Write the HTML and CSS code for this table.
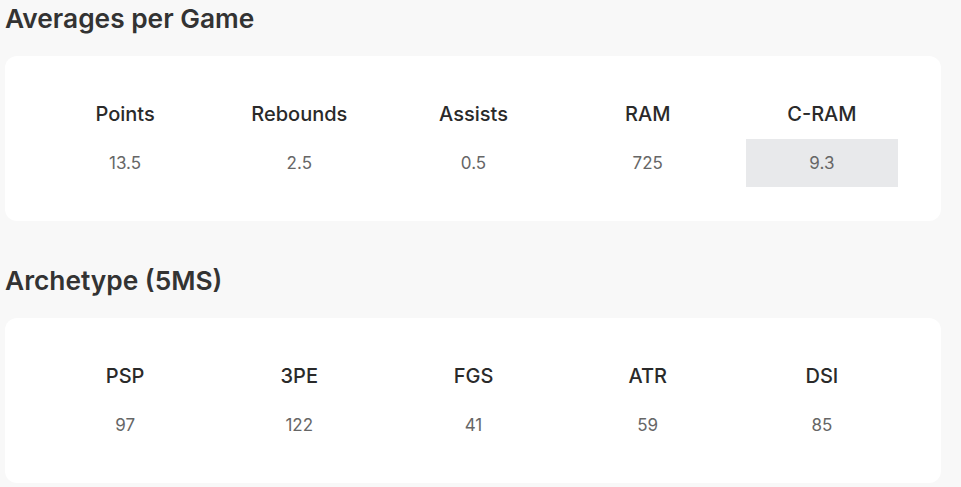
FILE: index.html
```html
<!DOCTYPE html>
<html lang="en">
<head>
<meta charset="utf-8">
<title>Player Stats</title>
<link rel="stylesheet" href="styles.css">
</head>
<body>
<main class="page">
  <section class="section">
    <h2 class="section-title">Averages per Game</h2>
    <div class="card">
      <div class="stat-grid">
        <div class="stat-head">Points</div>
        <div class="stat-head">Rebounds</div>
        <div class="stat-head">Assists</div>
        <div class="stat-head">RAM</div>
        <div class="stat-head">C-RAM</div>
        <div class="stat-value">13.5</div>
        <div class="stat-value">2.5</div>
        <div class="stat-value">0.5</div>
        <div class="stat-value">725</div>
        <div class="stat-value stat-value--highlight">9.3</div>
      </div>
    </div>
  </section>
  <section class="section">
    <h2 class="section-title">Archetype (5MS)</h2>
    <div class="card">
      <div class="stat-grid">
        <div class="stat-head">PSP</div>
        <div class="stat-head">3PE</div>
        <div class="stat-head">FGS</div>
        <div class="stat-head">ATR</div>
        <div class="stat-head">DSI</div>
        <div class="stat-value">97</div>
        <div class="stat-value">122</div>
        <div class="stat-value">41</div>
        <div class="stat-value">59</div>
        <div class="stat-value">85</div>
      </div>
    </div>
  </section>
</main>
</body>
</html>
```

FILE: styles.css
```css
html, body {
  margin: 0;
  padding: 0;
  background: #f8f8f8;
  font-family: Inter, "Liberation Sans", sans-serif;
}

.page {
  width: 936px;
  padding: 3px 0 0 5px;
  display: flex;
  flex-direction: column;
  gap: 44px;
}

.section-title {
  margin: 0 0 22px;
  font-size: 26.3px;
  line-height: 31px;
  font-weight: 600;
  color: #333333;
}

.card {
  background: #ffffff;
  border-radius: 12px;
  padding: 34px 43px 34px 44px;
}

.stat-grid {
  display: grid;
  grid-template-columns: repeat(5, 1fr);
  column-gap: 22px;
}

.stat-head,
.stat-value {
  padding: 12px 0;
  text-align: center;
}

.stat-head {
  font-size: 20px;
  line-height: 25px;
  font-weight: 500;
  color: #2a2a2a;
}

.stat-value {
  font-size: 17px;
  line-height: 24px;
  font-weight: 400;
  color: #666666;
}

.stat-value--highlight {
  background: #e8e9eb;
}
```
